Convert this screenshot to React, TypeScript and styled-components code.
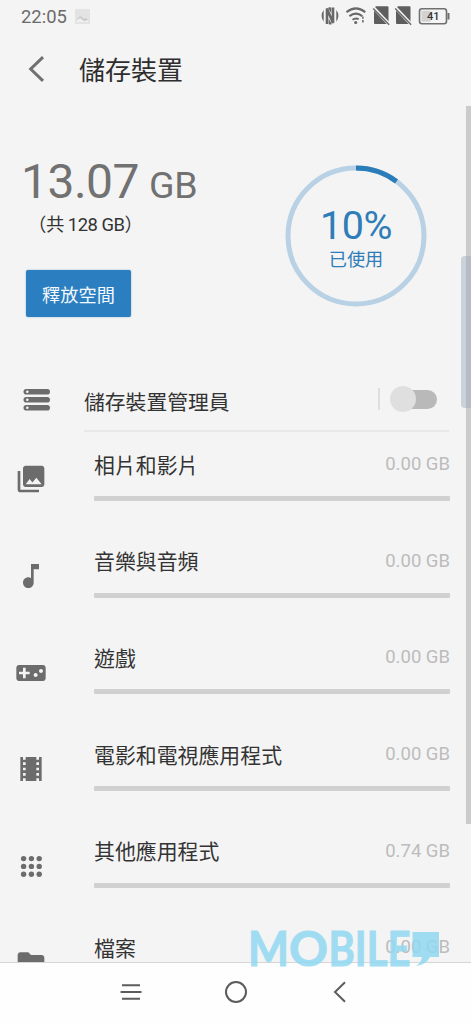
import React from "react";
import styled, { createGlobalStyle } from "styled-components";
import { MdPhotoLibrary, MdMusicNote, MdVideogameAsset, MdLocalMovies, MdFolder } from "react-icons/md";

const GlobalStyle = createGlobalStyle`
  * { box-sizing: border-box; }
  body { margin: 0; background: #f4f4f4; }
`;

const Screen = styled.div`
  position: relative;
  display: flex;
  flex-direction: column;
  width: 471px;
  height: 1024px;
  overflow: hidden;
  background: #f4f4f4;
  color: #333;
  font-family: Roboto, "Noto Sans CJK TC", sans-serif;
`;

const Content = styled.main`
  flex: none;
  height: 962px;
  overflow: hidden;
`;

const StatusBar = styled.div`
  display: flex;
  align-items: center;
  height: 32px;
  padding: 0 21px 0 21px;
  color: #6b6b6b;
`;

const Clock = styled.span`
  flex: 1;
  display: flex;
  align-items: center;
  gap: 8px;
  font-size: 18.4px;
  line-height: 32px;
  padding-top: 1px;
`;

const Header = styled.header`
  display: flex;
  align-items: center;
  height: 74px;
  padding-left: 28px;
  gap: 33px;
`;

const Title = styled.h1`
  margin: 0;
  padding-top: 3px;
  font-size: 26px;
  line-height: 36px;
  font-weight: 400;
  color: #2e2e2e;
`;

const Summary = styled.section`
  display: flex;
  justify-content: space-between;
  height: 262px;
  padding: 48px 44px 0 21px;
`;

const Usage = styled.div`
  display: flex;
  flex-direction: column;
  align-items: flex-start;
`;

const Used = styled.div`
  display: flex;
  align-items: baseline;
  gap: 10px;
  height: 56px;
  line-height: 56px;
  font-size: 48px;
  letter-spacing: -0.5px;
  color: #717171;
`;

const Unit = styled.span`
  font-size: 37.5px;
  letter-spacing: -0.4px;
`;

const Total = styled.div`
  height: 28px;
  margin: 1px 0 31px 7px;
  font-size: 18.4px;
  line-height: 28px;
  letter-spacing: -0.5px;
  color: #333;
`;

const FreeButton = styled.button`
  width: 105px;
  height: 47px;
  margin-left: 5px;
  padding: 0;
  border: 0;
  border-radius: 2px;
  background: #2b7fc0;
  box-shadow: 0 0 2px rgba(43, 127, 192, 0.5);
  color: #f3f8fc;
  font: inherit;
  font-size: 18.2px;
`;

const Ring = styled.div`
  position: relative;
  width: 142px;
  height: 142px;
  margin-top: 11.4px;
  display: flex;
  flex-direction: column;
  align-items: center;
  color: #2f7db8;
`;

const RingArt = styled.svg`
  position: absolute;
  inset: 0;
`;

const Percent = styled.span`
  margin-top: 38px;
  height: 46px;
  font-size: 39.5px;
  line-height: 46px;
  letter-spacing: -0.4px;
`;

const RingLabel = styled.span`
  font-size: 18.2px;
  line-height: 24px;
  margin-top: -1px;
`;

const Manager = styled.div`
  display: flex;
  align-items: center;
  height: 64px;
  padding-left: 23px;
`;

const ManagerBody = styled.div`
  flex: 1;
  display: flex;
  align-items: center;
  height: 64px;
  margin: 0 22px 0 33px;
  padding-right: 12px;
  border-bottom: 2px solid #e9e9e9;
`;

const ManagerLabel = styled.span`
  flex: 1;
  padding-top: 8px;
  font-size: 20.8px;
  line-height: 30px;
`;

const Divider = styled.i`
  width: 2px;
  height: 22px;
  margin-right: 10px;
  background: #dfdfdf;
`;

const Toggle = styled.div`
  display: flex;
  align-items: center;
  width: 47px;
  height: 26px;
  &::before {
    content: "";
    width: 26px;
    height: 26px;
    border-radius: 50%;
    background: #dfdfdf;
    z-index: 1;
  }
  &::after {
    content: "";
    width: 34px;
    height: 19px;
    margin-left: -13px;
    border-radius: 10px;
    background: #b9b9b9;
  }
`;

const Row = styled.div`
  display: flex;
  height: 96.7px;
  padding: 0 21px 0 15px;
`;

const RowIcon = styled.div`
  width: 79px;
  padding-top: 31.4px;
  color: #6c6c6c;
  svg { display: block; }
`;

const RowBody = styled.div`
  flex: 1;
`;

const RowText = styled.div`
  display: flex;
  justify-content: space-between;
  align-items: center;
  height: 64px;
`;

const RowName = styled.span`
  font-size: 20.9px;
  line-height: 30px;
  padding-top: 3px;
`;

const RowSize = styled.span`
  font-size: 18.5px;
  color: #bcbcbc;
`;

const Bar = styled.div`
  height: 5px;
  border-radius: 1px;
  background: #d0d0d0;
`;

const NavBar = styled.nav`
  display: flex;
  justify-content: center;
  align-items: center;
  gap: 80.5px;
  height: 62px;
  padding: 0 0 3px 0;
  border-top: 1px solid #d6d6d6;
  background: #fefefe;
`;

const ScrollThumb = styled.div`
  position: absolute;
  top: 106px;
  right: 0;
  width: 5px;
  height: 718px;
  background: #cbcbcb;
`;

const EdgeHandle = styled.div`
  position: absolute;
  top: 256px;
  right: 0;
  width: 10px;
  height: 152px;
  border-radius: 4px 0 0 4px;
  background: linear-gradient(90deg, #c9d2da 0 5px, #b7bbc6 5px);
`;

const Watermark = styled.svg`
  position: absolute;
  left: 248px;
  top: 926px;
  opacity: 0.85;
`;

const StorageIcon = () => (
  <svg width="28" height="24" viewBox="0 0 28 24">
    {[1, 9, 17].map((y) => (
      <g key={y}>
        <rect x="0.5" y={y} width="26.5" height="5.6" rx="2.8" fill="#6c6c6c" />
        <circle cx="4.3" cy={y + 2.8} r="1.3" fill="#f4f4f4" />
      </g>
    ))}
  </svg>
);

const AppsIcon = () => (
  <svg width="32" height="32" viewBox="0 0 32 32" fill="#6c6c6c">
    {[8.6, 16.4, 24.2].map((y) => [8.6, 16.4, 24.2].map((x) => <circle key={`${x}-${y}`} cx={x} cy={y} r="2.7" />))}
  </svg>
);

const StatusIcons = () => (
  <svg width="130" height="22" viewBox="320 5 130 22">
    <ellipse cx="330" cy="15.9" rx="8.4" ry="8.6" fill="#686868" />
    <path d="M326.2 25V9.5l7.6 13V6.5" fill="none" stroke="#f4f4f4" strokeWidth="5" />
    <path d="M327 24V8.6l6 14.4V7.6" fill="none" stroke="#686868" strokeWidth="2.6" strokeLinejoin="bevel" />
    <g fill="none" stroke="#686868" strokeWidth="2">
      <path d="M346.5 12.1q9.4-7.5 18.8 0M349.4 16.1q6.5-5 12.9 0M352.5 19.8q3.3-2.5 6.2-.5" strokeWidth="2" />
      <path d="M362.9 16.5v2.2M362.9 20v2.5" strokeWidth="1.5" />
    </g>
    <circle cx="355.7" cy="22.5" r="1.6" fill="#686868" />
    {[373, 395].map((x) => (
      <g key={x}>
        <path d={`M${x + 3} 6.2h11.5q1 0 1 1v15.7q0 1-1 1H${x + 2}q-1 0-1-1V8z`} fill="#5e5e5e" />
        <path d={`M${x - 0.5} 6.6l17 18`} stroke="#f4f4f4" strokeWidth="3.2" />
        <path d={`M${x + 0.2} 8.4l16 16.4`} stroke="#686868" strokeWidth="1.4" />
      </g>
    ))}
    <rect x="419.5" y="8.7" width="27" height="15" rx="2.5" fill="#f4f4f4" stroke="#707070" strokeWidth="1.6" />
    <rect x="421.5" y="10.7" width="9" height="11" fill="#d2d2d2" />
    <rect x="447.5" y="13" width="2" height="6.5" fill="#707070" />
    <text x="433.2" y="20.2" fontSize="11" fontWeight="500" textAnchor="middle" fill="#333">41</text>
  </svg>
);

const rows = [
  { name: "相片和影片", size: "0.00 GB", icon: <MdPhotoLibrary size={32} /> },
  { name: "音樂與音頻", size: "0.00 GB", icon: <MdMusicNote size={32} /> },
  { name: "遊戲", size: "0.00 GB", icon: <MdVideogameAsset size={32} /> },
  { name: "電影和電視應用程式", size: "0.00 GB", icon: <MdLocalMovies size={32} /> },
  { name: "其他應用程式", size: "0.74 GB", icon: <AppsIcon /> },
  { name: "檔案", size: "0.00 GB", icon: <MdFolder size={32} /> },
];

export default function App() {
  return (
    <Screen>
      <GlobalStyle />
      <Content>
        <StatusBar>
          <Clock>
            22:05
            <svg width="15" height="15" viewBox="0 0 15 15">
              <rect width="15" height="15" rx="1" fill="#e3e3e3" />
              <path d="M2 10l3-3 4 3 2-1 2 2v2H2z" fill="#c8c8c8" />
              <path d="M2 11l3-2 4 3 4-1v2H2z" fill="#f0f0f0" />
            </svg>
          </Clock>
          <StatusIcons />
        </StatusBar>
        <Header>
          <svg width="18" height="28" viewBox="0 0 18 28" fill="none" stroke="#707070" strokeWidth="3">
            <path d="M15 2.2L2.7 14 15 25.8" />
          </svg>
          <Title>儲存裝置</Title>
        </Header>
        <Summary>
          <Usage>
            <Used>13.07<Unit>GB</Unit></Used>
            <Total>（共 128 GB）</Total>
            <FreeButton>釋放空間</FreeButton>
          </Usage>
          <Ring>
            <RingArt width="142" height="142" viewBox="0 0 142 142" fill="none" strokeWidth="5">
              <circle cx="71" cy="71" r="68" stroke="#b9d1e4" />
              <path d="M71 3A68 68 0 0 1 111.5 16.4" stroke="#2b7db9" />
            </RingArt>
            <Percent>10%</Percent>
            <RingLabel>已使用</RingLabel>
          </Ring>
        </Summary>
        <Manager>
          <StorageIcon />
          <ManagerBody>
            <ManagerLabel>儲存裝置管理員</ManagerLabel>
            <Divider />
            <Toggle />
          </ManagerBody>
        </Manager>
        {rows.map((row) => (
          <Row key={row.name}>
            <RowIcon>{row.icon}</RowIcon>
            <RowBody>
              <RowText>
                <RowName>{row.name}</RowName>
                <RowSize>{row.size}</RowSize>
              </RowText>
              <Bar />
            </RowBody>
          </Row>
        ))}
      </Content>
      <NavBar>
        <svg width="24" height="24" viewBox="0 0 24 24" stroke="#5c5c5c" strokeWidth="2">
          <path d="M3 5.2h18M1.5 12h21M3 18.8h18" />
        </svg>
        <svg width="24" height="24" viewBox="0 0 24 24" fill="none" stroke="#5c5c5c" strokeWidth="2">
          <circle cx="12" cy="12" r="10" />
        </svg>
        <svg width="24" height="24" viewBox="0 0 24 24" fill="none" stroke="#5c5c5c" strokeWidth="2">
          <path d="M17 2.2L7 12l10 9.8" />
        </svg>
      </NavBar>
      <ScrollThumb />
      <EdgeHandle />
      <Watermark width="196" height="46" viewBox="248 926 196 46" fill="#91d8f2">
        <text y="966" fontFamily="Lato, sans-serif" fontWeight="700" fontSize="47" stroke="#91d8f2" strokeWidth="1">
          <tspan x="248" textLength="41" lengthAdjust="spacingAndGlyphs">M</tspan>
          <tspan x="289" textLength="39" lengthAdjust="spacingAndGlyphs">O</tspan>
          <tspan x="328.5" textLength="82" lengthAdjust="spacingAndGlyphs">BILE</tspan>
        </text>
        <path d="M412.5 932H439v25h-9q-4 8-14 9q5-3 6-9h-9.5z" />
      </Watermark>
    </Screen>
  );
}
